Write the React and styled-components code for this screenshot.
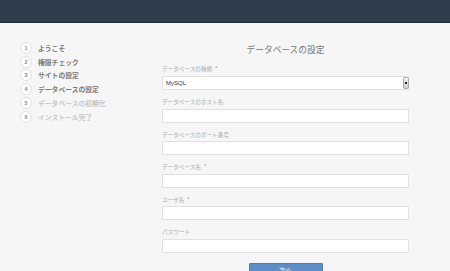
import React from "react";
import styled, { createGlobalStyle } from "styled-components";

const Global = createGlobalStyle`
  html, body {
    margin: 0;
    padding: 0;
    background: #f6f6f6;
    font-family: "Noto Sans CJK JP", "Noto Sans", sans-serif;
  }
`;

const Header = styled.div`
  height: 22px;
  background: #2f3c4b;
  border-bottom: 1px solid #1e2833;
`;

const Body = styled.div`
  display: flex;
  height: 248px;
  overflow: hidden;
`;

const Sidebar = styled.ul`
  list-style: none;
  margin: 0;
  padding: 18px 0 0 20px;
  width: 142px;
`;

const Step = styled.li`
  display: flex;
  align-items: center;
  height: 13.8px;
  gap: 6px;
  font-size: 6.8px;
  font-weight: ${(p) => (p.done ? 700 : 400)};
  color: ${(p) => (p.done ? "#7a7a7a" : "#b0b0b0")};
  white-space: nowrap;
`;

const Num = styled.span`
  width: 10px;
  height: 10px;
  border: 1px solid #e0e0e0;
  border-radius: 50%;
  background: #fff;
  display: flex;
  align-items: center;
  justify-content: center;
  font-size: 5.5px;
  font-weight: 700;
  color: #888;
  font-family: "Liberation Sans", sans-serif;
`;

const Main = styled.div`
  width: 247px;
  padding-top: 21px;
  display: flex;
  flex-direction: column;
`;

const Title = styled.h2`
  margin: 0 0 9.3px;
  text-align: center;
  font-size: 8.7px;
  line-height: 12px;
  font-weight: 400;
  color: #777;
`;

const Field = styled.div`
  display: flex;
  flex-direction: column;
  margin-bottom: 8.2px;
`;

const Label = styled.label`
  font-size: 5.6px;
  line-height: 8px;
  color: #aaa;
  margin-bottom: 2.4px;
  white-space: nowrap;
`;

const Req = styled.span`
  color: #e06a63;
  margin-left: 3px;
`;

const Input = styled.input`
  box-sizing: border-box;
  height: 14px;
  width: 100%;
  border: 1px solid #e1e1e1;
  border-radius: 1px;
  background: #fff;
  padding: 0 3px;
  font-size: 6px;
`;

const SelectBox = styled.div`
  box-sizing: border-box;
  display: flex;
  height: 14.3px;
  border: 1px solid #e1e1e1;
  border-right: none;
  background: #fff;
`;

const Select = styled.select`
  flex: 1;
  appearance: none;
  border: none;
  background: transparent;
  padding: 0 3px;
  font-size: 6px;
  font-family: "Liberation Sans", sans-serif;
  color: #333;
  outline: none;
`;

const Arrow = styled.span`
  box-sizing: border-box;
  width: 6px;
  border: 1px solid #a9a9a9;
  border-radius: 1.5px;
  background: linear-gradient(#f2f2f2, #cfcfcf);
  display: flex;
  align-items: center;
  justify-content: center;
  &::after {
    content: "";
    width: 2px;
    height: 1.5px;
    background: #222;
  }
`;

const Button = styled.button`
  align-self: center;
  margin-top: 2.4px;
  width: 74px;
  height: 18px;
  background: #5e8ec6;
  border: 1px solid #4c7cb5;
  border-radius: 1px;
  color: #fff;
  font-size: 6.5px;
  font-family: "Noto Sans CJK JP", sans-serif;
`;

const steps = [
  ["ようこそ", true],
  ["権限チェック", true],
  ["サイトの設定", true],
  ["データベースの設定", true],
  ["データベースの初期化", false],
  ["インストール完了", false],
];

const fields = [
  { label: "データベースのホスト名" },
  { label: "データベースのポート番号" },
  { label: "データベース名", req: true },
  { label: "ユーザ名", req: true },
  { label: "パスワード", type: "password" },
];

export default function App() {
  return (
    <>
      <Global />
      <Header />
      <Body>
        <Sidebar>
          {steps.map(([name, done], i) => (
            <Step key={i} done={done}>
              <Num>{i + 1}</Num>
              {name}
            </Step>
          ))}
        </Sidebar>
        <Main>
          <Title>データベースの設定</Title>
          <Field>
            <Label>
              データベースの種類<Req>*</Req>
            </Label>
            <SelectBox>
              <Select defaultValue="mysql">
                <option value="mysql">MySQL</option>
              </Select>
              <Arrow />
            </SelectBox>
          </Field>
          {fields.map((f, i) => (
            <Field key={i}>
              <Label>
                {f.label}
                {f.req && <Req>*</Req>}
              </Label>
              <Input type={f.type || "text"} />
            </Field>
          ))}
          <Button>次へ</Button>
        </Main>
      </Body>
    </>
  );
}
